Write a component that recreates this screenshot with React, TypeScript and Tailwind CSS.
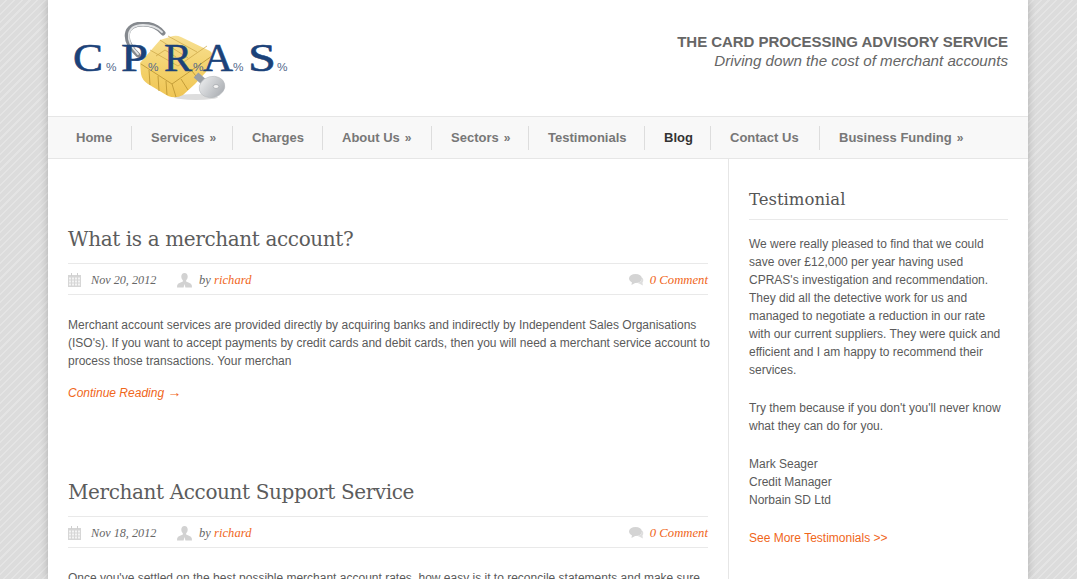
const navItems = [
  { label: 'Home', width: 'w-[75px]' },
  { label: 'Services', more: true, width: 'w-[101px]' },
  { label: 'Charges', width: 'w-[90px]' },
  { label: 'About Us', more: true, width: 'w-[109px]' },
  { label: 'Sectors', more: true, width: 'w-[97px]' },
  { label: 'Testimonials', width: 'w-[116px]' },
  { label: 'Blog', active: true, width: 'w-[66px]' },
  { label: 'Contact Us', width: 'w-[109px]' },
  { label: 'Business Funding', more: true, width: '' },
];

const Logo = () => {
  const letters = [
    { ch: 'C', x: 73, w: 30 },
    { ch: 'P', x: 121, w: 27 },
    { ch: 'R', x: 164, w: 28 },
    { ch: 'A', x: 203, w: 30 },
    { ch: 'S', x: 248, w: 28 },
  ];
  const percents = [106, 148, 193, 233, 277];
  return (
    <svg width="216" height="80" viewBox="72 22 216 80" className="block">
      <defs>
        <linearGradient id="gold" x1="0" y1="0" x2="0" y2="1">
          <stop offset="0" stopColor="#f7e093" />
          <stop offset="0.6" stopColor="#f3d068" />
          <stop offset="1" stopColor="#efc555" />
        </linearGradient>
        <linearGradient id="steel" x1="0" y1="0" x2="1" y2="1">
          <stop offset="0" stopColor="#f0f1f2" />
          <stop offset="1" stopColor="#a3a7ac" />
        </linearGradient>
      </defs>
      {/* shackle */}
      <path d="M138 55 C122 40 124 24 143 24 C152 24 159 28 163 33" fill="none" stroke="#85898e" strokeWidth="5" strokeLinecap="round" />
      <path d="M138 54 C124 40 126 25 143 25 C151 25 158 28 162 32" fill="none" stroke="#e2e4e6" strokeWidth="1.800" strokeLinecap="round" />
      {/* shadow */}
      <ellipse cx="196" cy="97" rx="22" ry="3" fill="#dddddd" />
      {/* lock body */}
      <path d="M160 40 L173 36 Q177 35 181 37 L210 51 Q214 54 212 59 L206 72 Q196 84 183 95 Q176 99 168 96 L148 84 Q142 80 141 74 L140 63 Z" fill="url(#gold)" />
      <path d="M141 64 L172 84 L176 97 M149 70 L150 85 M158 76 L159 91 M166 81 L167 95 M172 84 L212 56 M181 79 L188 90 M192 71 L199 80" fill="none" stroke="#b9922f" strokeWidth="0.8" />
      <path d="M150 50 L178 66 L207 46 M160 40 L188 58 M168 36 L197 52 M156 56 L165 50 L176 57" fill="none" stroke="#c9a443" strokeWidth="0.7" />
      {/* key */}
      <path d="M196 75 L205 83" stroke="#9a9fa5" strokeWidth="7" />
      <ellipse cx="212" cy="87" rx="13" ry="10.500" fill="url(#steel)" stroke="#b4b7bb" strokeWidth="0.5" transform="rotate(-15 212 87)" />
      <ellipse cx="216" cy="86.500" rx="2.800" ry="2" fill="#f3f3f3" stroke="#8a8f94" strokeWidth="0.5" />
      {letters.map((l) => (
        <text key={l.ch} x={l.x} y="70.500" fontSize="41" fontFamily="'Liberation Serif', serif" fill="#1b4279" stroke="#1b4279" strokeWidth="0.6" textLength={l.w} lengthAdjust="spacingAndGlyphs">
          {l.ch}
        </text>
      ))}
      {percents.map((x) => (
        <text key={x} x={x} y="71" fontSize="11" fontFamily="'Liberation Sans', sans-serif" fill="#54688c" textLength="10.500" lengthAdjust="spacingAndGlyphs">
          %
        </text>
      ))}
    </svg>
  );
};

const CalendarIcon = () => (
  <svg width="13" height="14" viewBox="0 0 13 14" className="block">
    <path d="M0 2h13v12H0z" fill="#d6d6d6" />
    <path d="M3 0h1v3H3zM9 0h1v3H9z" fill="#cfcfcf" />
    <path d="M1 4.500h2v2H1zM4 4.500h2v2H4zM7 4.500h2v2H7zM10 4.500h2v2h-2zM1 7.500h2v2H1zM4 7.500h2v2H4zM7 7.500h2v2H7zM10 7.500h2v2h-2zM1 10.500h2v2H1zM4 10.500h2v2H4zM7 10.500h2v2H7zM10 10.500h2v2h-2z" fill="#f4f4f4" />
  </svg>
);

const PersonIcon = () => (
  <svg width="15" height="15" viewBox="0 0 15 15" className="block">
    <path d="M7.500 0C5.400 0 4.300 1.500 4.300 3.600c0 1.600.7 3 1.600 3.800v1.200C3.600 9.400 1 10.300.2 12.200L0 14.500h6.600L7.500 11l.9 3.500H15l-.2-2.300c-.8-1.900-3.400-2.800-5.700-3.600V7.400c.9-.8 1.600-2.200 1.600-3.800C10.700 1.500 9.600 0 7.500 0z" fill="#d2d2d2" />
  </svg>
);

const CommentIcon = () => (
  <svg width="15" height="12" viewBox="0 0 15 12" className="block">
    <path d="M13 3.500c1.500 1 1.800 3.500.5 5l.4 3-3.300-1.700L8 8.800c2.500 0 5.500-2 5-5.300z" fill="#dedede" />
    <ellipse cx="6.500" cy="4.500" rx="6.500" ry="4.500" fill="#d4d4d4" />
    <path d="M3 7.500L2.500 11 7 8.500z" fill="#d4d4d4" />
  </svg>
);

const PostMeta = ({ date }: { date: string }) => (
  <div className="flex items-center h-[32px] pt-[2px] border-y border-[#e9e9e9] font-['Liberation_Serif',serif] italic text-[12.500px] text-[#666]">
    <CalendarIcon />
    <span className="ml-[10px] w-[86px] text-[12.200px]">{date}</span>
    <PersonIcon />
    <span className="ml-[7px] tracking-[0.05px]">
      by <span className="text-[#f0661a]">richard</span>
    </span>
    <span className="ml-auto flex items-center">
      <CommentIcon />
      <span className="ml-[6px] text-[12.700px] text-[#f0661a]">0 Comment</span>
    </span>
  </div>
);

const Post = ({ title, date, children }: { title: string; date: string; children: React.ReactNode }) => (
  <article>
    <h2 className="font-['DejaVu_Serif',serif] text-[20px] tracking-[-0.38px] leading-[30px] text-[#5c5c5c] mb-[9px]">{title}</h2>
    <PostMeta date={date} />
    <div className="mt-[21px]">{children}</div>
  </article>
);

export default function App() {
  return (
    <div className="h-[579px] overflow-hidden bg-[#dcdcdc] bg-[repeating-linear-gradient(135deg,#dcdcdc_0px,#dcdcdc_4px,#e4e4e4_4px,#e4e4e4_5.500px)] font-['Liberation_Sans',sans-serif]">
      <div className="w-[980px] h-[579px] bg-white shadow-[0_0_8px_rgba(0,0,0,0.22)] flex flex-col ml-[48px]">
        <header className="h-[116px] shrink-0 flex justify-between pl-[24px] pr-[20px] pt-[22px]">
          <Logo />
          <div className="text-right pt-[10px]">
            <div className="font-bold text-[15px] leading-[20px] text-[#666] tracking-[-0.05px]">THE CARD PROCESSING ADVISORY SERVICE</div>
            <div className="italic text-[15.150px] leading-[17px] text-[#666]">Driving down the cost of merchant accounts</div>
          </div>
        </header>

        <nav className="h-[43px] shrink-0 flex items-center pl-[9px] border-y border-[#e6e6e6] bg-[#f8f8f8]">
          {navItems.map((item, i) => (
            <a
              key={item.label}
              className={`h-[24px] flex items-center whitespace-nowrap pl-[19px] text-[13px] font-bold ${item.width} ${item.active ? 'text-[#333]' : 'text-[#777]'} ${i < navItems.length - 1 ? 'border-r border-[#ddd]' : ''}`}
            >
              {item.label}
              {item.more && <span className="ml-[5px] text-[12px]">»</span>}
            </a>
          ))}
        </nav>

        <div className="flex-1 flex min-h-0 text-[12px] leading-[18px] text-[#5a5a5a]">
          <main className="w-[680px] shrink-0 px-[20px] pt-[65px]">
            <div className="mb-[75px]">
              <Post title="What is a merchant account?" date="Nov 20, 2012">
                <p className="mr-[-3px]">
                  Merchant account services are provided directly by acquiring banks and indirectly by Independent Sales Organisations (ISO's). If you want to accept payments by credit cards and debit cards, then you will need a merchant service account to process those transactions. Your merchan
                </p>
                <a className="block mt-[14px] italic text-[#f0661a]">
                  Continue Reading <span className="text-[14px] leading-none">→</span>
                </a>
              </Post>
            </div>
            <Post title="Merchant Account Support Service" date="Nov 18, 2012">
              <p>
                Once you've settled on the best possible merchant account rates, how easy is it to reconcile statements and make sure
              </p>
            </Post>
          </main>

          <aside className="flex-1 border-l border-[#e6e6e6] px-[20px] pt-[27px]">
            <h3 className="font-['DejaVu_Serif',serif] text-[16.500px] leading-[28px] text-[#555] pb-[5px] border-b border-[#e9e9e9] mb-[15px]">Testimonial</h3>
            <p className="mb-[20px]">
              We were really pleased to find that we could save over £12,000 per year having used CPRAS's investigation and recommendation. They did all the detective work for us and managed to negotiate a reduction in our rate with our current suppliers. They were quick and efficient and I am happy to recommend their services.
            </p>
            <p className="mb-[20px]">Try them because if you don't you'll never know what they can do for you.</p>
            <p className="mb-[20px]">
              Mark Seager
              <br />
              Credit Manager
              <br />
              Norbain SD Ltd
            </p>
            <a className="text-[#f0661a]">See More Testimonials &gt;&gt;</a>
          </aside>
        </div>
      </div>
    </div>
  );
}
